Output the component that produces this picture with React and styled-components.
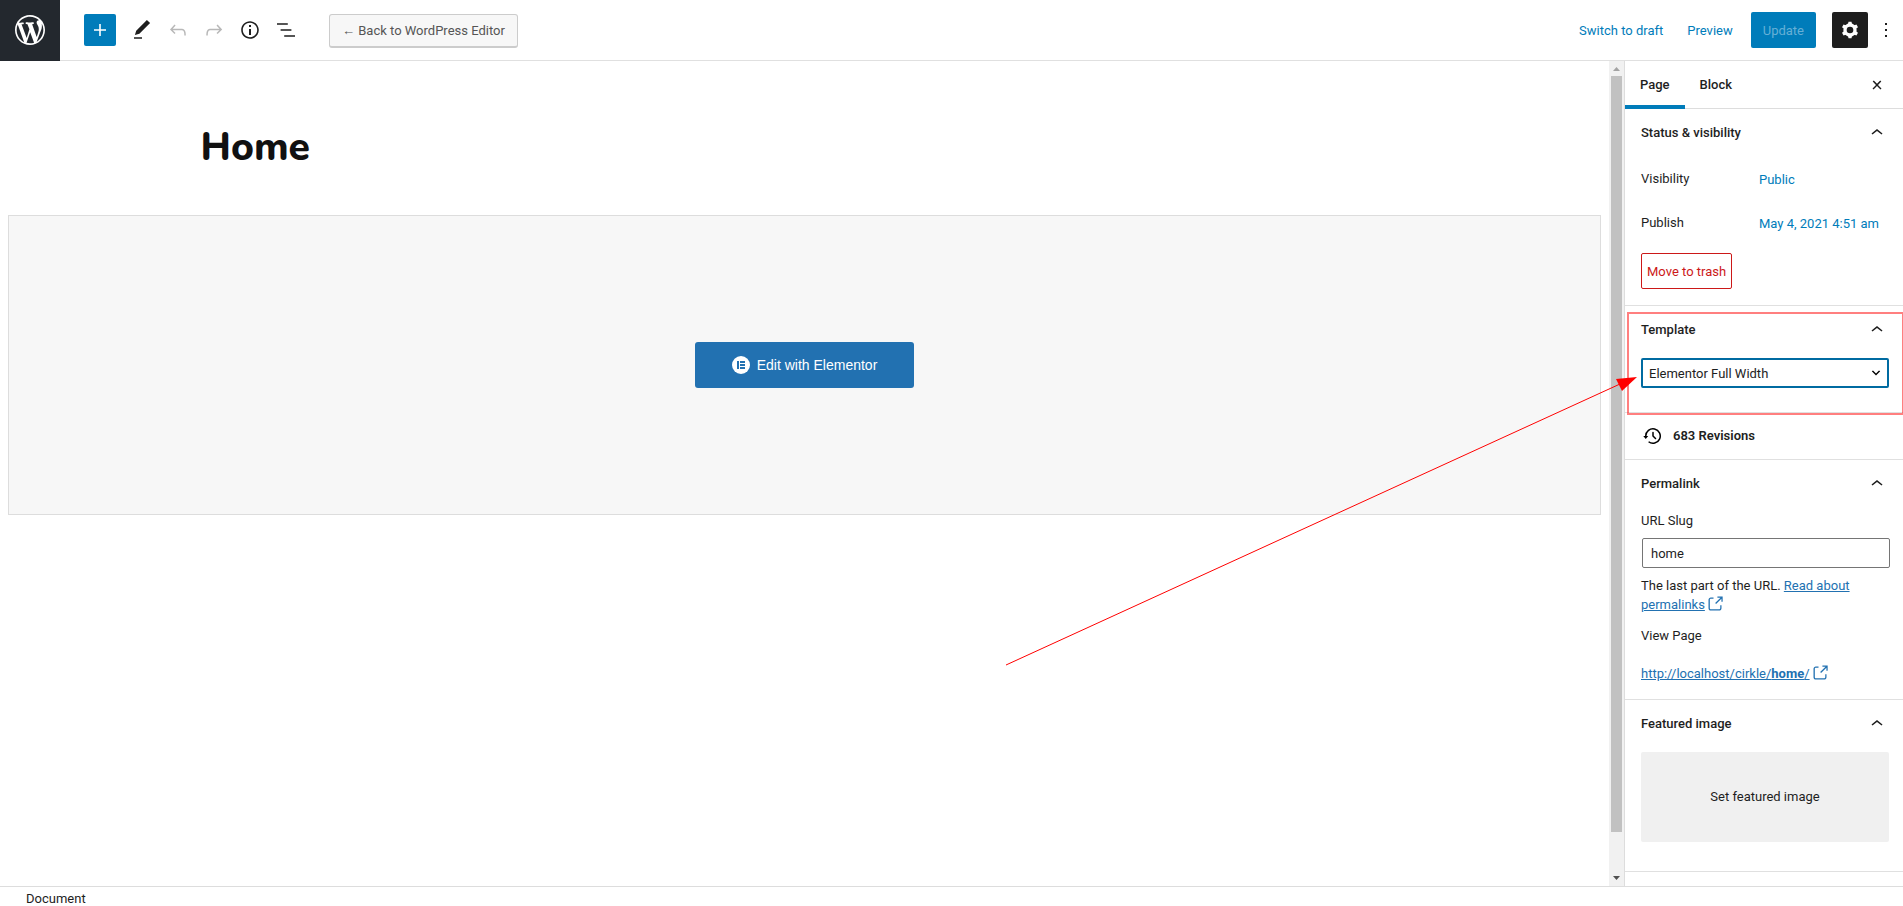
import React from "react";
import styled, { createGlobalStyle, css } from "styled-components";

const Global = createGlobalStyle`
  *, *::before, *::after { box-sizing: border-box; }
  html, body, #root { height: 100%; }
  body {
    margin: 0;
    overflow: hidden;
    background: #fff;
    color: #1e1e1e;
    font: 13px/18px Roboto, "Liberation Sans", sans-serif;
  }
  button, input, select { font: inherit; color: inherit; }
  button { cursor: pointer; }
`;

const Shell = styled.div`
  height: 100vh;
  display: grid;
  grid-template-rows: auto minmax(0, 1fr) 20px;
`;

const Header = styled.header`
  display: flex;
  align-items: stretch;
  justify-content: space-between;
  height: 61px;
  border-bottom: 1px solid #e0e0e0;
`;

const HomeLink = styled.a`
  display: flex;
  align-items: center;
  justify-content: center;
  width: 60px;
  height: 61px;
  background: #23282e;
  svg { fill: #fff; }
`;

const Tools = styled.div`
  display: flex;
  align-items: center;
`;

const ToolGroup = styled.div`
  display: flex;
  align-items: center;
  gap: 4px;
  margin-left: 24px;
`;

const IconButton = styled.button`
  display: flex;
  align-items: center;
  justify-content: center;
  width: ${(p) => (p.$size === "small" ? 24 : 32)}px;
  height: ${(p) => (p.$size === "large" ? 36 : 32)}px;
  padding: 0;
  border: 0;
  border-radius: 2px;
  background: transparent;
  color: ${(p) => (p.disabled ? "#b8b8b8" : "#1e1e1e")};
  svg { display: block; fill: currentColor; }
  ${(p) =>
    p.$tone === "primary" &&
    css`background: #007cba; color: #fff; margin-right: 6px;`}
  ${(p) =>
    p.$tone === "dark" &&
    css`background: #1e1e1e; color: #fff; width: 36px;`}
`;

const BackButton = styled.button`
  height: 34px;
  margin: 2px 0 0 27px;
  padding: 0 12px;
  border: 1px solid #ccc;
  border-bottom-width: 2px;
  border-radius: 3px;
  background: #f7f7f7;
  color: #555;
`;

const Actions = styled.div`
  display: flex;
  align-items: center;
  gap: 16px;
  padding-right: 5px;
`;

const ActionGroup = styled.div`
  display: flex;
  align-items: center;
  gap: ${(p) => p.$gap}px;
`;

const TextButton = styled.button`
  padding: 2px 2px 0;
  border: 0;
  background: none;
  color: #007cba;
`;

const UpdateButton = styled.button`
  height: 36px;
  padding: 2px 12px 0;
  border: 0;
  border-radius: 2px;
  background: #007cba;
  color: #66b0d6;
`;

const Body = styled.div`
  display: grid;
  grid-template-columns: minmax(0, 1fr) 15px 279px;
  min-height: 0;
`;

const Canvas = styled.main`
  padding: 0 8px;
`;

const TitleText = styled.h1`
  max-width: 1208px;
  margin: 57px auto 38px;
  color: #111;
  font: 800 39px/59px Nunito, "Open Sans", sans-serif;
`;

const BuilderPanel = styled.section`
  display: flex;
  align-items: center;
  justify-content: center;
  height: 300px;
  border: 1px solid #ddd;
  background: #f7f7f7;
`;

const ElementorButton = styled.button`
  display: flex;
  align-items: center;
  justify-content: center;
  gap: 7px;
  height: 46px;
  padding: 0 37px;
  border: 0;
  border-radius: 3px;
  background: #2271b1;
  color: #fff;
  font: 14px/18px "Liberation Sans", Arial, sans-serif;
`;

const ScrollTrack = styled.div`
  display: flex;
  flex-direction: column;
  align-items: center;
  background: #f1f1f1;
`;

const ScrollThumb = styled.div`
  flex: 1;
  width: 11px;
  margin-bottom: 39px;
  background: #c1c1c1;
`;

const ScrollArrow = styled.svg`
  display: block;
  flex: none;
  width: 15px;
  height: 15px;
  fill: ${(p) => p.$color};
`;

const Sidebar = styled.aside`
  border-left: 1px solid #ddd;
  overflow: hidden;
  min-height: 0;
`;

const TabBar = styled.div`
  display: flex;
  height: 48px;
  padding-right: 14px;
  align-items: center;
  border-bottom: 1px solid #ddd;
`;

const Tab = styled.button`
  height: 48px;
  padding: 0 15px;
  border: 0;
  background: none;
  font-weight: 500;
  box-shadow: ${(p) => (p["aria-selected"] ? "inset 0 -4px #007cba" : "none")};
`;

const Spacer = styled.span`
  flex: 1;
`;

const PanelBox = styled.section`
  padding: 0 14px ${(p) => p.$bottom}px 16px;
  border-bottom: 1px solid #e0e0e0;
`;

const PanelTitle = styled.button`
  display: flex;
  align-items: center;
  justify-content: space-between;
  width: 100%;
  height: 48px;
  margin-bottom: 4px;
  padding: 0;
  border: 0;
  background: none;
  font-weight: 500;
  svg { display: block; fill: currentColor; }
`;

const Row = styled.div`
  display: flex;
  align-items: center;
  height: 36px;
  margin-bottom: 8px;
  > span { width: 116px; }
`;

const TrashButton = styled.button`
  height: 36px;
  margin-top: 4px;
  padding: 2px 5px 0;
  border: 1px solid #cc1818;
  border-radius: 2px;
  background: #fff;
  color: #cc1818;
`;

const Field = styled.label`
  display: block;
`;

const SelectWrap = styled.div`
  display: grid;
  align-items: center;
  > * { grid-area: 1 / 1; }
  svg { justify-self: end; pointer-events: none; margin-right: 7px; }
`;

const Select = styled.select`
  appearance: none;
  width: 100%;
  height: 30px;
  padding: 2px 6px 0;
  border: 2px solid #006ba1;
  border-radius: 2px;
  background: #fff;
`;

const TextInput = styled.input`
  display: block;
  width: 100%;
  height: 30px;
  margin: 8px 0 8px 1px;
  padding: 0 8px;
  border: 1px solid #757575;
  border-radius: 2px;
  background: #fff;
`;

const RevisionsButton = styled.button`
  display: flex;
  align-items: center;
  gap: 8px;
  width: 100%;
  height: 46px;
  padding: 0;
  border: 0;
  background: none;
  font-weight: 600;
`;

const Paragraph = styled.p`
  margin: 0 0 ${(p) => p.$after || 0}px;
  line-height: 19px;
`;

const Anchor = styled.a`
  color: #2271b1;
  svg { vertical-align: -3px; margin: -2px 0; fill: currentColor; }
`;

const FeaturedButton = styled.button`
  display: block;
  width: 100%;
  height: 90px;
  border: 0;
  border-radius: 2px;
  background: #f0f0f0;
`;

const Footer = styled.footer`
  border-top: 1px solid #ddd;
  padding: 0 26px;
  line-height: 24px;
`;

const Annotation = styled.svg`
  position: absolute;
  right: 0;
  top: 0;
  width: 903px;
  height: 700px;
  pointer-events: none;
`;

function Icon({ d, size = 24, box = "0 0 24 24" }) {
  return (
    <svg width={size} height={size} viewBox={box} aria-hidden="true">
      <path d={d} />
    </svg>
  );
}

const icons = {
  wordpress:
    "M20 10c0-5.51-4.49-10-10-10C4.48 0 0 4.49 0 10c0 5.52 4.48 10 10 10 5.51 0 10-4.48 10-10zM7.78 15.37L4.37 6.22c.55-.02 1.17-.08 1.17-.08.5-.06.44-1.13-.06-1.11 0 0-1.45.11-2.37.11-.18 0-.37 0-.58-.01C4.12 2.69 6.87 1.11 10 1.11c2.33 0 4.45.87 6.05 2.34-.68-.11-1.65.39-1.65 1.58 0 .74.45 1.36.9 2.1.35.61.55 1.36.55 2.46 0 1.49-1.4 5-1.4 5l-3.03-8.37c.54-.02.82-.17.82-.17.5-.05.44-1.25-.06-1.22 0 0-1.44.12-2.38.12-.87 0-2.33-.12-2.33-.12-.5-.03-.56 1.2-.06 1.22l.92.08 1.26 3.41zM17.41 10c.24-.64.74-1.87.43-4.25.7 1.29 1.05 2.71 1.05 4.25 0 3.29-1.73 6.24-4.4 7.78.97-2.59 1.94-5.2 2.92-7.78zM6.1 18.09C3.12 16.65 1.11 13.53 1.11 10c0-1.3.23-2.48.72-3.59C3.25 10.3 4.67 14.2 6.1 18.09zm4.03-6.63l2.58 6.98c-.86.29-1.76.45-2.71.45-.79 0-1.57-.11-2.29-.33.81-2.38 1.62-4.74 2.42-7.1z",
  plus: "M18 11.2h-5.2V6h-1.6v5.2H6v1.6h5.2V18h1.6v-5.2H18z",
  edit: "M20.1 5.1L16.9 2 6.2 12.7l-1.3 4.4 4.5-1.3L20.1 5.1zM4 20.8h8v-1.5H4v1.5z",
  undo: "M18.3 11.7c-.6-.6-1.4-.9-2.3-.9H6.7l2.9-3.3-1.1-1-4.5 5L8.5 16l1-1-2.7-2.7H16c.5 0 .9.2 1.3.5 1 1 1 3.4 1 4.5v.3h1.5v-.2c0-1.5 0-4.3-1.5-5.7z",
  redo: "M15.6 6.5l-1.1 1 2.9 3.3H8c-.9 0-1.7.3-2.3.9-1.4 1.5-1.4 4.2-1.4 5.6v.2h1.5v-.3c0-1.1 0-3.5 1-4.5.3-.3.7-.5 1.3-.5h9.2L14.5 15l1.1 1.1 4.6-4.6-4.6-5z",
  info: "M12 3.2c-4.8 0-8.8 3.9-8.8 8.8 0 4.8 3.9 8.8 8.8 8.8 4.8 0 8.8-3.9 8.8-8.8 0-4.8-4-8.8-8.8-8.8zm0 16c-4 0-7.2-3.3-7.2-7.2C4.8 8 8 4.8 12 4.8s7.2 3.3 7.2 7.2c0 4-3.2 7.2-7.2 7.2zM11 17h2v-6h-2v6zm0-8h2V7h-2v2z",
  list: "M13.8 5.2H3v1.5h10.8V5.2zm-3.6 12v1.5H21v-1.5H10.2zm7.2-6H6.6v1.5h10.8v-1.5z",
  more: "M13 19h-2v-2h2v2zm0-6h-2v-2h2v2zm0-6h-2V5h2v2z",
  close:
    "M13 11.9l3.3-3.4-1.1-1-3.2 3.3-3.2-3.3-1.1 1 3.3 3.4-3.5 3.6 1 1L12 13l3.5 3.5 1-1z",
  up: "M6.5 12.4L12 8l5.5 4.4-.9 1.2L12 10l-4.5 3.6-1-1.2z",
  history:
    "M5.5 12h1.75l-2.5 3-2.5-3H4a8 8 0 113.134 6.35l.907-1.194A6.5 6.5 0 105.5 12zm9.53 1.97l-2.28-2.28V8.5a.75.75 0 00-1.5 0V12a.747.747 0 00.218.529l1.282-.84-1.28.842 2.5 2.5a.75.75 0 101.06-1.061z",
  external:
    "M18.2 17c0 .7-.6 1.2-1.2 1.2H7c-.7 0-1.2-.6-1.2-1.2V7c0-.7.6-1.2 1.2-1.2h3.2V4.2H7C5.5 4.2 4.2 5.5 4.2 7v10c0 1.5 1.2 2.8 2.8 2.8h10c1.5 0 2.8-1.2 2.8-2.8v-3.6h-1.5V17zM14.9 3v1.5h3.7l-6.4 6.4 1.1 1.1 6.4-6.4v3.7h1.5V3h-6.3z",
  down: "M5 6l5 5 5-5 2 1-7 7-7-7 2-1z",
};

function Gear() {
  return (
    <svg width="20" height="20" viewBox="0 0 24 24" aria-hidden="true">
      <circle cx="12" cy="12" r="6" fill="none" stroke="currentColor" strokeWidth="4" />
      {[0, 60, 120, 180, 240, 300].map((angle) => (
        <path key={angle} d="M9.5 5.5L10.2 2h3.6l.7 3.5z" transform={`rotate(${angle} 12 12)`} />
      ))}
    </svg>
  );
}

function Panel({ title, bottom, children }) {
  return (
    <PanelBox $bottom={bottom}>
      <PanelTitle aria-expanded="true">
        {title}
        <Icon d={icons.up} />
      </PanelTitle>
      {children}
    </PanelBox>
  );
}

export default function App() {
  return (
    <Shell>
      <Global />
      <Header>
        <Tools>
          <HomeLink href="#" aria-label="View pages">
            <Icon d={icons.wordpress} size={30} box="0 0 20 20" />
          </HomeLink>
          <ToolGroup>
            <IconButton $tone="primary" aria-label="Add block"><Icon d={icons.plus} /></IconButton>
            <IconButton aria-label="Tools"><Icon d={icons.edit} /></IconButton>
            <IconButton disabled aria-label="Undo"><Icon d={icons.undo} /></IconButton>
            <IconButton disabled aria-label="Redo"><Icon d={icons.redo} /></IconButton>
            <IconButton aria-label="Details"><Icon d={icons.info} /></IconButton>
            <IconButton aria-label="List view"><Icon d={icons.list} /></IconButton>
          </ToolGroup>
          <BackButton>← Back to WordPress Editor</BackButton>
        </Tools>
        <Actions>
          <ActionGroup $gap={20}>
            <TextButton>Switch to draft</TextButton>
            <TextButton>Preview</TextButton>
          </ActionGroup>
          <UpdateButton disabled>Update</UpdateButton>
          <ActionGroup $gap={6}>
            <IconButton $tone="dark" $size="large" aria-label="Settings"><Gear /></IconButton>
            <IconButton $size="small" aria-label="Options"><Icon d={icons.more} /></IconButton>
          </ActionGroup>
        </Actions>
      </Header>

      <Body>
        <Canvas>
          <TitleText>Home</TitleText>
          <BuilderPanel>
            <ElementorButton>
              <svg width="18" height="18" viewBox="0 0 18 18" aria-hidden="true">
                <circle cx="9" cy="9" r="9" fill="#fff" />
                <path fill="#2271b1" d="M5 5h2v8H5zM8 5h5v2H8zM8 8h5v2H8zM8 11h5v2H8z" />
              </svg>
              Edit with Elementor
            </ElementorButton>
          </BuilderPanel>
        </Canvas>

        <ScrollTrack>
          <ScrollArrow viewBox="0 0 15 15" $color="#a3a3a3"><path d="M4 10h7L7.5 6z" /></ScrollArrow>
          <ScrollThumb />
          <ScrollArrow viewBox="0 0 15 15" $color="#505050"><path d="M4 5h7L7.5 9z" /></ScrollArrow>
        </ScrollTrack>

        <Sidebar>
          <TabBar role="tablist">
            <Tab role="tab" aria-selected={true}>Page</Tab>
            <Tab role="tab" aria-selected={false}>Block</Tab>
            <Spacer />
            <IconButton $size="small" aria-label="Close settings"><Icon d={icons.close} /></IconButton>
          </TabBar>

          <Panel title="Status & visibility" bottom={16}>
            <Row><span>Visibility</span><TextButton>Public</TextButton></Row>
            <Row><span>Publish</span><TextButton>May 4, 2021 4:51 am</TextButton></Row>
            <TrashButton>Move to trash</TrashButton>
          </Panel>

          <Panel title="Template" bottom={24}>
            <SelectWrap>
              <Select aria-label="Template" defaultValue="full">
                <option value="full">Elementor Full Width</option>
              </Select>
              <Icon d={icons.down} size={12} box="0 0 20 20" />
            </SelectWrap>
          </Panel>

          <PanelBox $bottom={0}>
            <RevisionsButton><Icon d={icons.history} />683 Revisions</RevisionsButton>
          </PanelBox>

          <Panel title="Permalink" bottom={16}>
            <Field>
              URL Slug
              <TextInput defaultValue="home" />
            </Field>
            <Paragraph $after={12}>
              The last part of the URL.{" "}
              <Anchor href="#">Read about permalinks<Icon d={icons.external} size={20} /></Anchor>
            </Paragraph>
            <Paragraph $after={19}>View Page</Paragraph>
            <Paragraph>
              <Anchor href="#">http://localhost/cirkle/<b>home</b>/<Icon d={icons.external} size={20} /></Anchor>
            </Paragraph>
          </Panel>

          <Panel title="Featured image" bottom={29}>
            <FeaturedButton>Set featured image</FeaturedButton>
          </Panel>
        </Sidebar>
      </Body>

      <Footer>Document</Footer>

      <Annotation viewBox="0 0 903 700" aria-hidden="true">
        <rect x="628" y="313" width="275" height="101" fill="none" stroke="#f00" strokeOpacity="0.5" strokeWidth="2" />
        <path d="M6 665L620 384" stroke="#f00" fill="none" />
        <path d="M637 377L616 379L622 391z" fill="#f00" />
      </Annotation>
    </Shell>
  );
}
